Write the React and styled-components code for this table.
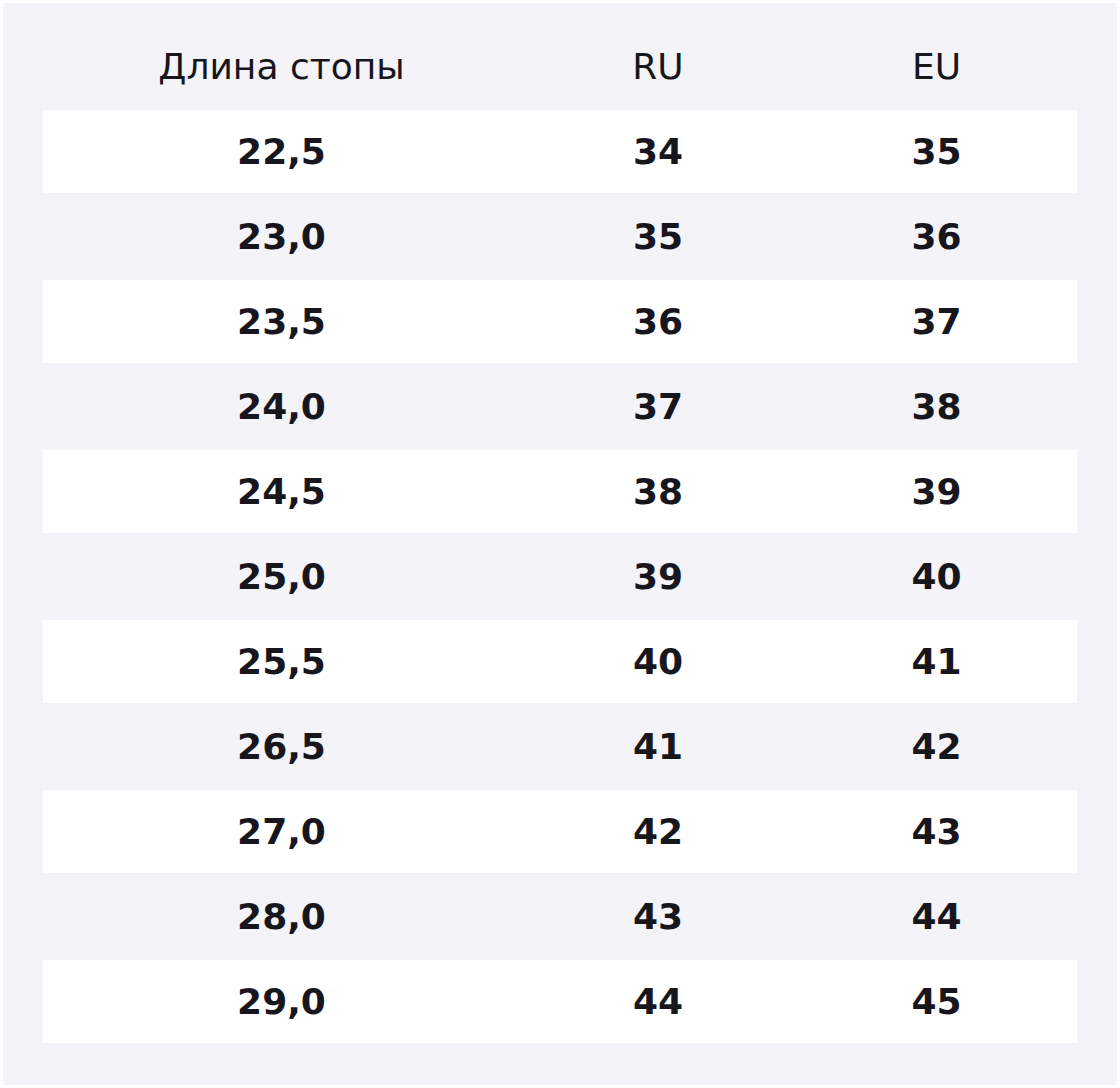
import React from 'react';
import styled, { createGlobalStyle } from 'styled-components';

const GlobalStyle = createGlobalStyle`
  body {
    margin: 0;
    background: #ffffff;
    font-family: "DejaVu Sans", "Liberation Sans", sans-serif;
    color: #16161c;
  }
`;

const Wrapper = styled.div`
  margin: 3px;
  width: 1114px;
  box-sizing: border-box;
  padding: 21px 40px 42px;
  background: #f3f3f8;
`;

const Row = styled.div`
  display: grid;
  grid-template-columns: 477px 276px 1fr;
  align-items: center;
  height: ${(props) => (props.header ? 86 : props.striped ? 83 : 87)}px;
  background: ${(props) => (props.striped ? '#ffffff' : 'transparent')};
`;

const Cell = styled.div`
  text-align: center;
  font-size: 36px;
  font-weight: ${(props) => (props.header ? 400 : 700)};
  line-height: 1;
`;

const rows = [
  ['22,5', '34', '35'],
  ['23,0', '35', '36'],
  ['23,5', '36', '37'],
  ['24,0', '37', '38'],
  ['24,5', '38', '39'],
  ['25,0', '39', '40'],
  ['25,5', '40', '41'],
  ['26,5', '41', '42'],
  ['27,0', '42', '43'],
  ['28,0', '43', '44'],
  ['29,0', '44', '45'],
];

const App = () => (
  <>
    <GlobalStyle />
    <Wrapper>
      <Row header>
        <Cell header>Длина стопы</Cell>
        <Cell header>RU</Cell>
        <Cell header>EU</Cell>
      </Row>
      {rows.map((row, i) => (
        <Row key={row[0]} striped={i % 2 === 0}>
          {row.map((value, j) => (
            <Cell key={j}>{value}</Cell>
          ))}
        </Row>
      ))}
    </Wrapper>
  </>
);

export default App;
